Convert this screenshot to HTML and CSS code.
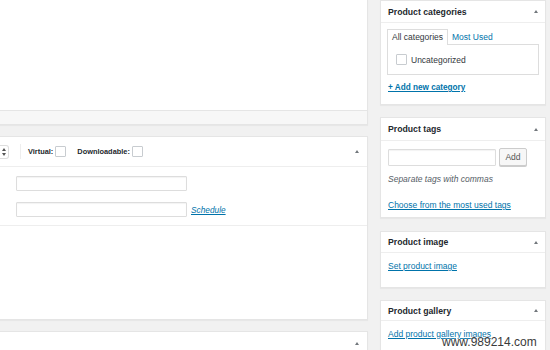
FILE: index.html
```html
<!DOCTYPE html>
<html lang="en">
<head>
  <meta charset="UTF-8" />
  <meta name="viewport" content="width=device-width, initial-scale=1.0"/>
  <title>Edit Product</title>
  <link rel="stylesheet" href="styles.css">
</head>
<body>

<div class="wrap">
  <!-- Kolom utama -->
  <div class="main">
    <div class="postbox editor">
      <div class="editor-area"></div>
      <div class="status-bar"></div>
    </div>

    <div class="postbox product-data">
      <div class="pd-header">
        <span class="type-select">
          <svg width="4" height="8" viewBox="0 0 4 8"><path d="M0 3 L2 0 L4 3 Z M0 5 L2 8 L4 5 Z" fill="#555"/></svg>
        </span>
        <span class="sep"></span>
        <label class="opt">Virtual: <span class="check"></span></label>
        <label class="opt opt-dl">Downloadable: <span class="check"></span></label>
        <span class="toggle"></span>
      </div>
      <div class="pd-fields">
        <div class="field-row"><span class="input wide"></span></div>
        <div class="field-row"><span class="input wide"></span><a href="#" class="schedule">Schedule</a></div>
      </div>
      <div class="pd-rest"></div>
    </div>

    <div class="postbox next-box">
      <div class="next-header"><span class="toggle"></span></div>
    </div>
  </div>

  <!-- Sidebar -->
  <div class="side">
    <div class="postbox box">
      <div class="box-head"><h2>Product categories</h2><span class="toggle"></span></div>
      <div class="box-inside">
        <div class="tabs">
          <span class="tab active">All categories</span>
          <a href="#" class="tab">Most Used</a>
        </div>
        <div class="tab-panel">
          <span class="check"></span><span class="cat-label">Uncategorized</span>
        </div>
        <a href="#" class="add-new">+ Add new category</a>
      </div>
    </div>

    <div class="postbox box tags-box">
      <div class="box-head"><h2>Product tags</h2><span class="toggle"></span></div>
      <div class="box-inside">
        <div class="tag-row">
          <span class="input tag-input"></span>
          <span class="button">Add</span>
        </div>
        <p class="howto">Separate tags with commas</p>
        <a href="#" class="box-link most-used">Choose from the most used tags</a>
      </div>
    </div>

    <div class="postbox box image-box">
      <div class="box-head"><h2>Product image</h2><span class="toggle"></span></div>
      <div class="box-inside">
        <a href="#" class="box-link">Set product image</a>
      </div>
    </div>

    <div class="postbox box gallery-box">
      <div class="box-head"><h2>Product gallery</h2><span class="toggle"></span></div>
      <div class="box-inside">
        <a href="#" class="box-link">Add product gallery images</a>
      </div>
    </div>
  </div>
</div>

<div class="watermark">www.989214.com</div>

</body>
</html>
```

FILE: styles.css
```css
body {
  font-family: "Liberation Sans", Arial, sans-serif;
  font-size: 8.5px;
  color: #32373c;
  background: #f1f1f1;
  margin: 0;
  padding: 0;
  overflow: hidden;
  height: 350px;
  position: relative;
}

a {
  color: #0073aa;
}

.wrap {
  display: flex;
  gap: 12px;
  align-items: flex-start;
}

.main {
  width: 368px;
  flex: none;
}

.side {
  width: 166px;
  flex: none;
}

.postbox {
  background: #fff;
  border: 1px solid #e5e5e5;
  box-shadow: 0 1px 1px rgba(0,0,0,0.04);
}

.main .postbox {
  border-left: 0;
}

/* toggle arrow */
.toggle {
  width: 0;
  height: 0;
  border-left: 2.5px solid transparent;
  border-right: 2.5px solid transparent;
  border-bottom: 3px solid #72777c;
  margin-left: auto;
}

/* editor */
.editor {
  border-top: 0;
}

.editor-area {
  height: 110px;
}

.status-bar {
  height: 13px;
  background: #f7f7f7;
  border-top: 1px solid #e5e5e5;
}

/* product data */
.product-data {
  margin-top: 11px;
}

.pd-header {
  height: 29px;
  display: flex;
  align-items: center;
  border-bottom: 1px solid #eee;
  padding-right: 8px;
}

.type-select {
  width: 9px;
  height: 14px;
  border: 1px solid #ddd;
  border-left: 0;
  border-radius: 0 3px 3px 0;
  display: flex;
  align-items: center;
  justify-content: flex-start;
  padding-left: 2px;
  box-sizing: border-box;
}

.sep {
  width: 1px;
  height: 15px;
  background: #eee;
  margin-left: 11px;
}

.opt {
  display: flex;
  align-items: center;
  font-weight: bold;
  font-size: 7.4px;
  color: #23282d;
  margin-left: 7px;
}

.opt-dl {
  margin-left: 11px;
}

.opt .check {
  margin-left: 2px;
}

.check {
  display: inline-block;
  width: 9px;
  height: 9px;
  border: 1px solid #c8ccd0;
  border-radius: 1px;
  background: #fff;
}

.pd-fields {
  padding: 9px 0 8px 16px;
  border-bottom: 1px solid #eee;
  display: flex;
  flex-direction: column;
  gap: 11px;
}

.field-row {
  display: flex;
  align-items: center;
}

.input {
  display: block;
  border: 1px solid #ddd;
  border-radius: 1px;
  box-shadow: inset 0 1px 1px rgba(0,0,0,0.05);
  background: #fff;
  box-sizing: border-box;
}

.input.wide {
  width: 171px;
  height: 15px;
}

.schedule {
  font-style: italic;
  margin-left: 4px;
  font-size: 8.3px;
}

.pd-rest {
  height: 93px;
}

.next-box {
  margin-top: 11px;
}

.next-header {
  height: 22px;
  display: flex;
  align-items: center;
  padding-right: 8px;
}

/* sidebar boxes */
.box-head {
  display: flex;
  align-items: center;
  height: 21px;
  border-bottom: 1px solid #eee;
  padding: 0 7px;
}

.box-head h2 {
  margin: 0;
  font-size: 8.7px;
  font-weight: bold;
  color: #23282d;
}

.box-inside {
  padding: 6px 6px 12px;
}

.tabs {
  display: flex;
  align-items: flex-end;
  margin-bottom: -1px;
}

.tab {
  line-height: 15px;
  padding: 0 4px;
  border: 1px solid transparent;
  border-bottom: 0;
  text-decoration: none;
  position: relative;
}

.tab.active {
  border-color: #ddd;
  background: #fff;
  color: #32373c;
  z-index: 1;
}

.tab + .tab {
  padding-left: 3px;
}

.tab-panel {
  height: 29px;
  border: 1px solid #ddd;
  display: flex;
  align-items: center;
  padding-left: 8px;
}

.cat-label {
  margin-left: 4px;
}

.add-new {
  display: inline-block;
  margin: 8px 0 0 1px;
  font-weight: bold;
  font-size: 8.2px;
}

.tags-box {
  margin-top: 12px;
}

.tags-box .box-head {
  height: 22px;
}

.tags-box .box-inside {
  padding: 7px 6px 7px;
}

.tag-row {
  display: flex;
  align-items: center;
}

.tag-input {
  width: 108px;
  height: 17px;
  margin-left: 1px;
}

.button {
  margin-left: 3px;
  width: 28px;
  height: 18px;
  box-sizing: border-box;
  border: 1px solid #ccc;
  border-radius: 2px;
  background: #f7f7f7;
  box-shadow: 0 1px 0 #ccc;
  display: flex;
  align-items: center;
  justify-content: center;
  color: #555;
}

.howto {
  margin: 8px 0 0 1px;
  font-style: italic;
  color: #555d66;
  line-height: 10px;
}

.box-link {
  display: inline-block;
  margin-left: 1px;
  line-height: 10px;
}

.most-used {
  margin-top: 16px;
}

.image-box {
  margin-top: 13px;
}

.image-box .box-head {
  height: 20px;
}

.image-box .box-inside {
  padding: 8px 6px 16px;
}

.gallery-box {
  margin-top: 12px;
}

.gallery-box .box-head {
  height: 19px;
}

.gallery-box .box-inside {
  padding: 8px 6px 15px;
}

.watermark {
  position: absolute;
  left: 442px;
  top: 335px;
  font-size: 12px;
  color: #3a3a3a;
  text-shadow: 0 0 2px #fff, 0 0 2px #fff;
}
```
